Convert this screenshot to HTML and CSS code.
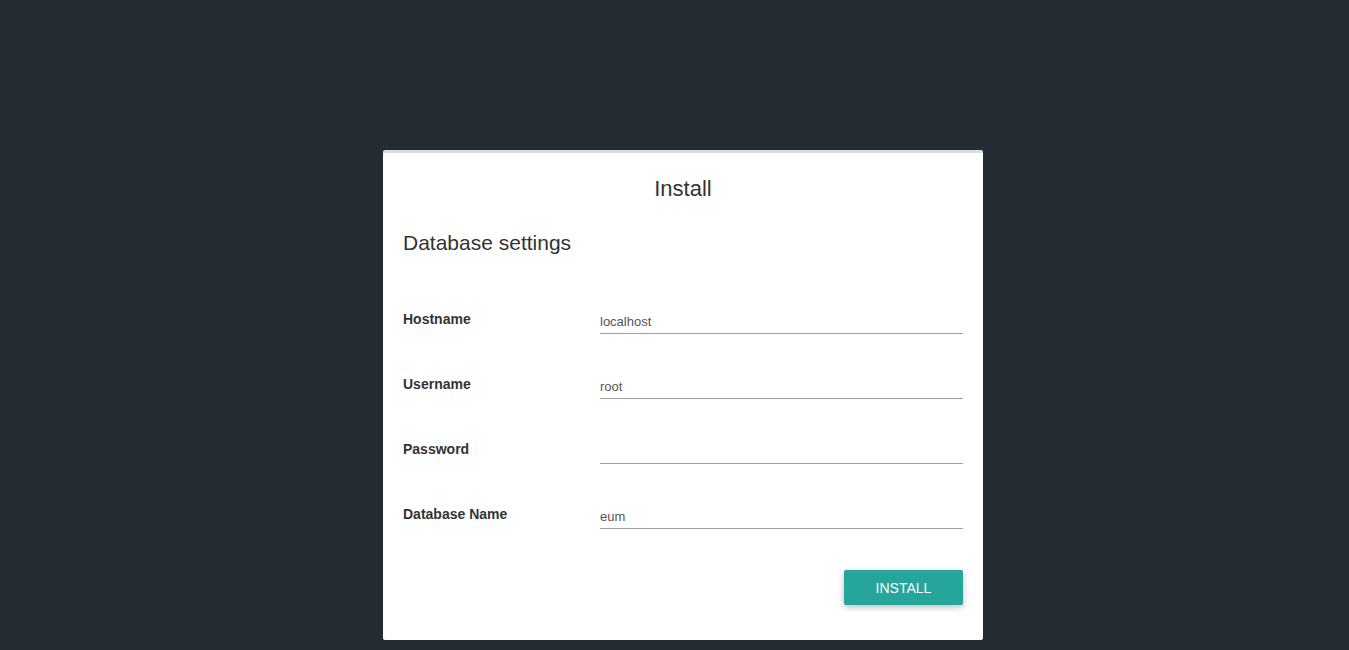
FILE: index.html
```html
<!DOCTYPE html>
<html lang="en">
<head>
<meta charset="utf-8">
<title>Install</title>
<link rel="stylesheet" href="styles.css">
</head>
<body>
<main class="page">
  <section class="card">
    <h1 class="card-title">Install</h1>
    <h2 class="section-title">Database settings</h2>
    <form class="form">
      <div class="row">
        <label class="label" for="host">Hostname</label>
        <input class="input" id="host" type="text" value="localhost">
      </div>
      <div class="row">
        <label class="label" for="user">Username</label>
        <input class="input" id="user" type="text" value="root">
      </div>
      <div class="row">
        <label class="label" for="pass">Password</label>
        <input class="input" id="pass" type="password" value="">
      </div>
      <div class="row">
        <label class="label" for="db">Database Name</label>
        <input class="input" id="db" type="text" value="eum">
      </div>
      <div class="actions">
        <button class="btn" type="button">INSTALL</button>
      </div>
    </form>
  </section>
</main>
</body>
</html>
```
FILE: styles.css
```css
html, body {
  margin: 0;
  padding: 0;
  background: #232c32;
  height: 100%;
  overflow: hidden;
}
body {
  font-family: "Liberation Sans", Arial, sans-serif;
  color: #333;
}
.page {
  padding: 150px 0 0 17px;
}
.card {
  width: 600px;
  margin: 0 auto;
  box-sizing: border-box;
  background: #fff;
  border-top: 3px solid #dadee3;
  border-radius: 2px;
  padding: 21px 20px 35px;
}
.card-title {
  margin: 0;
  font-size: 22px;
  line-height: 30px;
  font-weight: normal;
  text-align: center;
  color: #333;
}
.section-title {
  margin: 24px 0 0;
  font-size: 21px;
  line-height: 30px;
  font-weight: normal;
  color: #333;
}
.form {
  display: flex;
  flex-direction: column;
  gap: 40px;
  margin-top: 51px;
}
.row {
  display: grid;
  grid-template-columns: 197px 1fr;
  align-items: start;
  height: 25px;
}
.label {
  font-size: 14px;
  line-height: 20px;
  font-weight: bold;
  color: #333;
}
.input {
  margin: 2px 0 0;
  padding: 0;
  height: 22px;
  box-sizing: content-box;
  border: none;
  border-bottom: 1px solid #9e9e9e;
  outline: none;
  background: transparent;
  font-family: "Liberation Sans", Arial, sans-serif;
  font-size: 13px;
  line-height: 22px;
  color: #555;
  width: 100%;
}
.actions {
  display: flex;
  justify-content: flex-end;
  margin-top: 1px;
}
.btn {
  width: 119px;
  height: 35px;
  padding: 0;
  border: none;
  border-radius: 2px;
  background: #26a69a;
  color: #fff;
  font-family: "Liberation Sans", Arial, sans-serif;
  font-size: 14px;
  text-align: center;
  box-shadow: 0 2px 5px rgba(0,0,0,0.16), 0 2px 10px rgba(0,0,0,0.12);
  cursor: pointer;
}
```
